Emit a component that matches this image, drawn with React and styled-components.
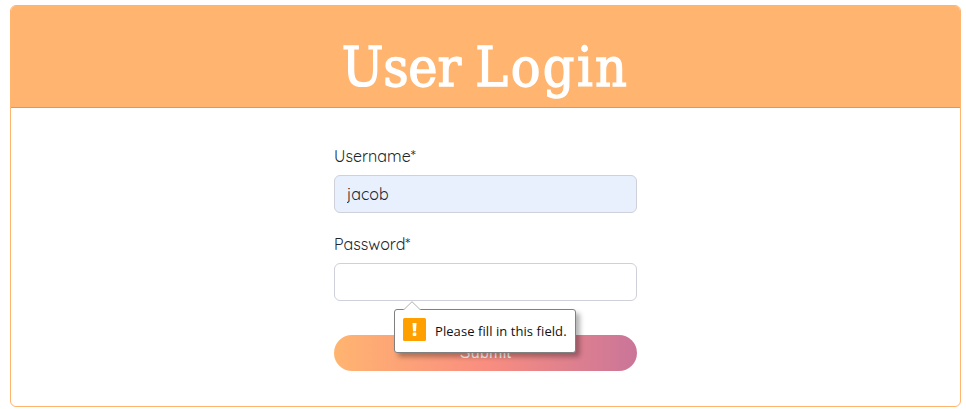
import React from "react";
import styled, { createGlobalStyle } from "styled-components";

const GlobalStyle = createGlobalStyle`
  *, *::before, *::after { box-sizing: border-box; }
  body { margin: 0; background: #fff; }
`;

const Page = styled.main`
  height: 409px;
  padding: 5px 5px 2px 10px;
  overflow: hidden;
`;

const Card = styled.section`
  height: 402px;
  border: 1px solid #ffb470;
  border-radius: 6px;
  background: #fff;
`;

const CardHeader = styled.header`
  display: flex;
  justify-content: center;
  align-items: center;
  height: 102px;
  padding-top: 21px;
  background: #ffb470;
  border-bottom: 1px solid #d9995f;
  border-radius: 5px 5px 0 0;
`;

const Title = styled.h1`
  margin: 0;
  color: #fff;
  font: 400 55px/67px "Roboto Slab", "DejaVu Serif", serif;
  font-stretch: 75%;
  white-space: nowrap;
  word-spacing: -1px;
  -webkit-text-stroke: 1.3px #fff;
`;

const TitleWord = styled.span`
  letter-spacing: ${(p) => p.$tracking}px;
`;

const Form = styled.form`
  display: flex;
  flex-direction: column;
  width: 303px;
  margin: 36px auto 0;
`;

const Field = styled.div`
  position: relative;
  display: flex;
  flex-direction: column;
  gap: 7px;
  margin-bottom: ${(p) => p.$gap}px;
`;

const Label = styled.label`
  color: #212529;
  font: 400 16px/24px Quicksand, Lato, sans-serif;
`;

const Input = styled.input`
  width: 100%;
  height: 38px;
  padding: 6px 12px;
  border: 1px solid #ced0da;
  border-radius: 6px;
  outline: none;
  background: ${(p) => (p.$filled ? "#e8f0fe" : "#fff")};
  color: #212529;
  font: 400 16px/24px Quicksand, Lato, sans-serif;
`;

const Submit = styled.button`
  height: 36px;
  padding: 0;
  border: 0;
  border-radius: 18px;
  background: linear-gradient(to right, #ffb470, #f98e80 50%, #ca7599);
  color: #fff;
  font: 400 16px/36px "Liberation Sans", Arial, sans-serif;
  letter-spacing: 0.25px;
`;

const Bubble = styled.div`
  position: absolute;
  z-index: 1;
  top: 77px;
  left: 60px;
  display: flex;
  align-items: center;
  gap: 9px;
  width: 182px;
  height: 44px;
  padding: 0 8px 4px;
  border: 1px solid #808080;
  border-radius: 3px;
  background: #fff;
  box-shadow: 4px 4px 5px rgba(0, 0, 0, 0.3);
`;

const Pointer = styled.svg`
  position: absolute;
  top: -9px;
  left: 8px;
`;

const WarningIcon = styled.svg`
  flex: none;
`;

const Message = styled.span`
  padding-top: 3px;
  color: #111;
  font: 400 13px/18px "Segoe UI", "Open Sans", sans-serif;
  letter-spacing: 0.07px;
  white-space: nowrap;
`;

function ValidationBubble({ children }) {
  return (
    <Bubble role="alert">
      <Pointer width="18" height="10" viewBox="0 0 18 10">
        <path d="M0 10V9L1 8.5 9 .7l8 7.8 1 .5v1Z" fill="#fff" />
        <path d="M1 8.5 9 .7l8 7.8" fill="none" stroke="#b0b0b0" />
      </Pointer>
      <WarningIcon width="23" height="23" viewBox="0 0 23 23">
        <rect width="23" height="23" rx="1.5" fill="#ffa000" />
        <path d="M9.5 5h4l-.5 8.2h-3Z" fill="#fff" />
        <rect x="9.7" y="14.6" width="3.6" height="3.4" rx="1" fill="#fff" />
      </WarningIcon>
      <Message>{children}</Message>
    </Bubble>
  );
}

export default function App() {
  return (
    <Page>
      <GlobalStyle />
      <Card>
        <CardHeader>
          <Title>
            <TitleWord $tracking={-0.2}>User </TitleWord>
            <TitleWord $tracking={2.4}>Login</TitleWord>
          </Title>
        </CardHeader>
        <Form noValidate onSubmit={(e) => e.preventDefault()}>
          <Field $gap={19}>
            <Label htmlFor="username">Username*</Label>
            <Input id="username" type="text" defaultValue="jacob" $filled />
          </Field>
          <Field $gap={34}>
            <Label htmlFor="password">Password*</Label>
            <Input id="password" type="password" />
            <ValidationBubble>Please fill in this field.</ValidationBubble>
          </Field>
          <Submit type="submit">Submit</Submit>
        </Form>
      </Card>
    </Page>
  );
}
